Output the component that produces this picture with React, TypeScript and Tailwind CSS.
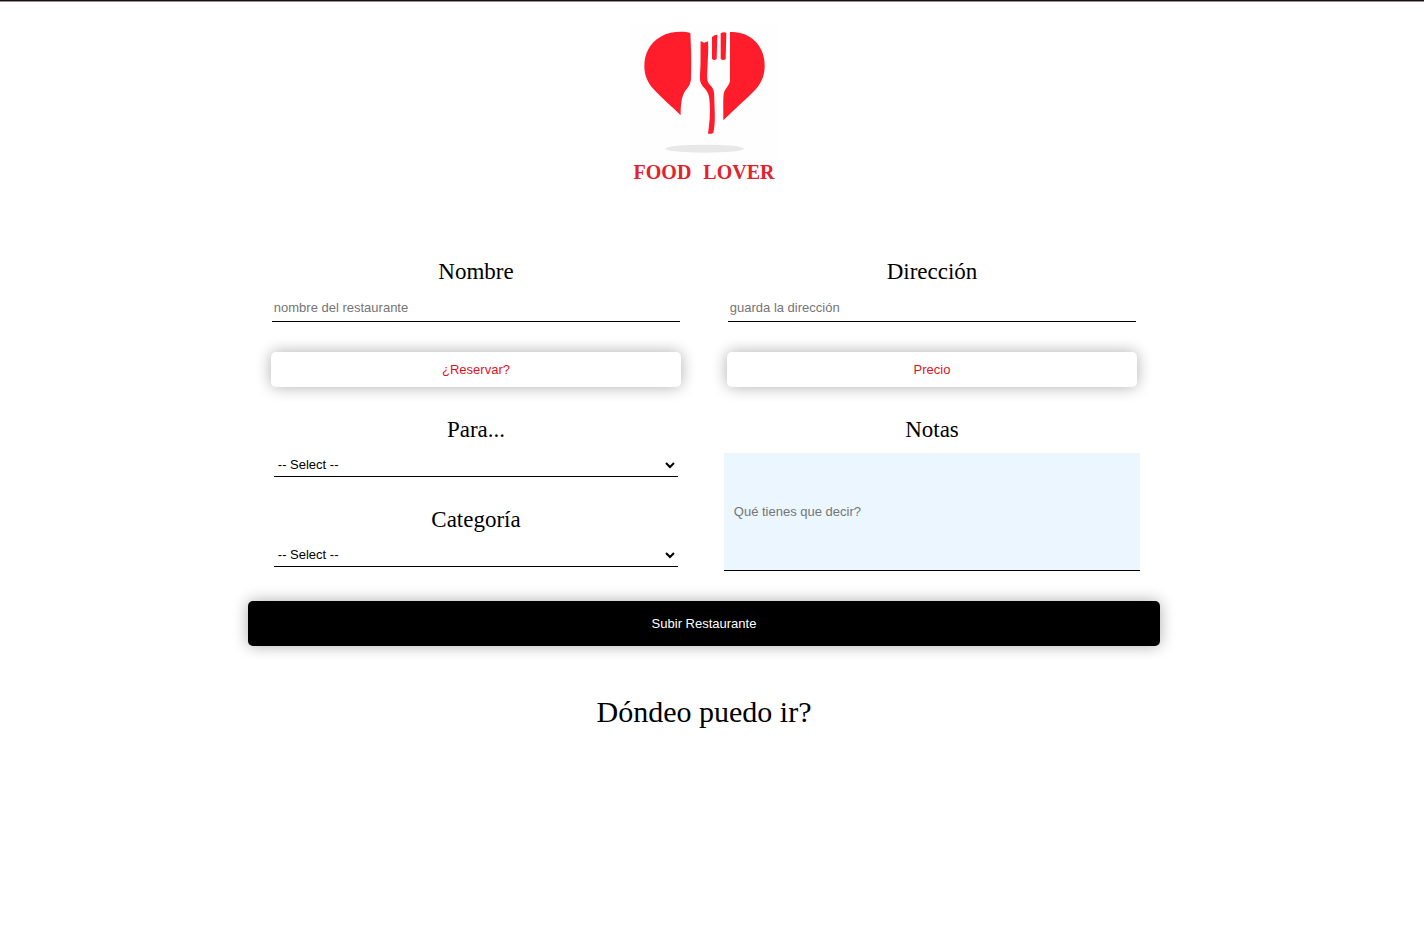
import { useId } from "react";
import type { ReactNode } from "react";

const headingClass = "text-[23px] leading-[26px]";
const lineClass = "border-b border-black outline-none";
const shadowClass = "rounded-[5px] shadow-[0_0_15px_rgba(0,0,0,0.32)] cursor-pointer";

function Logo() {
  return (
    <div className="flex flex-col items-center">
      <svg
        viewBox="27 0 450 420"
        className="h-[140px] w-[150px]"
        role="img"
        aria-label="Food Lover"
      >
        <rect x="27" y="14" width="450" height="406" fill="#fefefe" />
        <g fill="#ff1c2b">
          <path d="M211 39C190 33 150 34 122 50C90 68 73 100 73 138C73 166 84 190 101 208C126 236 158 262 182 286C182 256 184 228 197 211C208 198 213 190 213 172C215 130 213 80 211 39Z" />
          <path d="M330 36C358 34 388 44 408 66C426 86 434 110 434 138C434 166 424 190 406 209C376 240 340 270 310 301C310 270 309 240 311 222C314 205 328 198 330 182Z" />
          <path d="M242 63L252 68L264 64C266 90 263 120 262 150C260 180 262 188 272 197C282 206 283 218 283 240C284 275 287 310 280 338Q273 343 264 341C268 310 272 280 269 250C268 225 264 216 253 204C242 192 239 185 240 164C243 130 241 90 242 63Z" />
          <path d="M276 51Q283 44 292 44L290 117Q283 123 276 117Z" />
          <path d="M302 40Q310 35 319 38L317 117Q309 123 302 117Z" />
        </g>
        <ellipse cx="254" cy="386" rx="118" ry="12" fill="#e8e8e8" />
      </svg>
      <p className="flex gap-3 text-xl leading-6 font-bold text-[#e3222d]">
        <span>FOOD</span>
        <span>LOVER</span>
      </p>
    </div>
  );
}

function Field({ label, children }: { label: string; children: (id: string) => ReactNode }) {
  const id = useId();
  return (
    <div className="flex flex-col items-center gap-2.5">
      <label htmlFor={id} className={headingClass}>
        {label}
      </label>
      {children(id)}
    </div>
  );
}

function TextInput({ id, placeholder }: { id: string; placeholder: string }) {
  return (
    <input
      id={id}
      type="text"
      placeholder={placeholder}
      className={`${lineClass} h-[27px] w-[calc(90%-2px)] px-0.5 pb-0.5 font-['Liberation_Sans',Arial,sans-serif] text-[13px] placeholder:text-[#757575]`}
    />
  );
}

function SelectInput({ id }: { id: string }) {
  return (
    <select
      id={id}
      className={`${lineClass} h-6 w-[calc(90%-6px)] bg-transparent font-['Liberation_Sans',Arial,sans-serif] text-[13px]`}
    >
      <option>-- Select --</option>
    </select>
  );
}

function ToggleButton({ children }: { children: ReactNode }) {
  return (
    <button
      type="button"
      className={`${shadowClass} h-[35px] w-[90%] self-center bg-white font-['Liberation_Sans',Arial,sans-serif] text-[13px] text-[#e0121f]`}
    >
      {children}
    </button>
  );
}

export default function App() {
  return (
    <div className="min-h-screen bg-white font-['Liberation_Serif','Times_New_Roman',serif] text-black">
      <div className="h-0.5 border-t border-t-[#140f0f] bg-[#9a9292]" />
      <header className="pt-[18px] pr-4">
        <Logo />
      </header>
      <main className="flex flex-col items-center pt-[75px] pr-4">
        <form className="flex w-full max-w-[912px] flex-col gap-[30px]">
          <div className="grid grid-cols-2">
            <div className="flex flex-col gap-[30px]">
              <Field label="Nombre">
                {(id) => <TextInput id={id} placeholder="nombre del restaurante" />}
              </Field>
              <ToggleButton>¿Reservar?</ToggleButton>
              <Field label="Para...">{(id) => <SelectInput id={id} />}</Field>
              <Field label="Categoría">{(id) => <SelectInput id={id} />}</Field>
            </div>
            <div className="flex flex-col gap-[30px]">
              <Field label="Dirección">
                {(id) => <TextInput id={id} placeholder="guarda la dirección" />}
              </Field>
              <ToggleButton>Precio</ToggleButton>
              <Field label="Notas">
                {(id) => (
                  <input
                    id={id}
                    type="text"
                    placeholder="Qué tienes que decir?"
                    className={`${lineClass} h-[118px] w-[calc(90%+6px)] bg-[#ebf6fe] px-2.5 font-['Liberation_Sans',Arial,sans-serif] text-[13px] placeholder:text-[#757575]`}
                  />
                )}
              </Field>
            </div>
          </div>
          <button
            type="submit"
            className={`${shadowClass} h-[45px] bg-black font-['Liberation_Sans',Arial,sans-serif] text-[13px] text-white`}
          >
            Subir Restaurante
          </button>
        </form>
        <h1 className="pt-12 text-3xl">Dóndeo puedo ir?</h1>
      </main>
    </div>
  );
}
